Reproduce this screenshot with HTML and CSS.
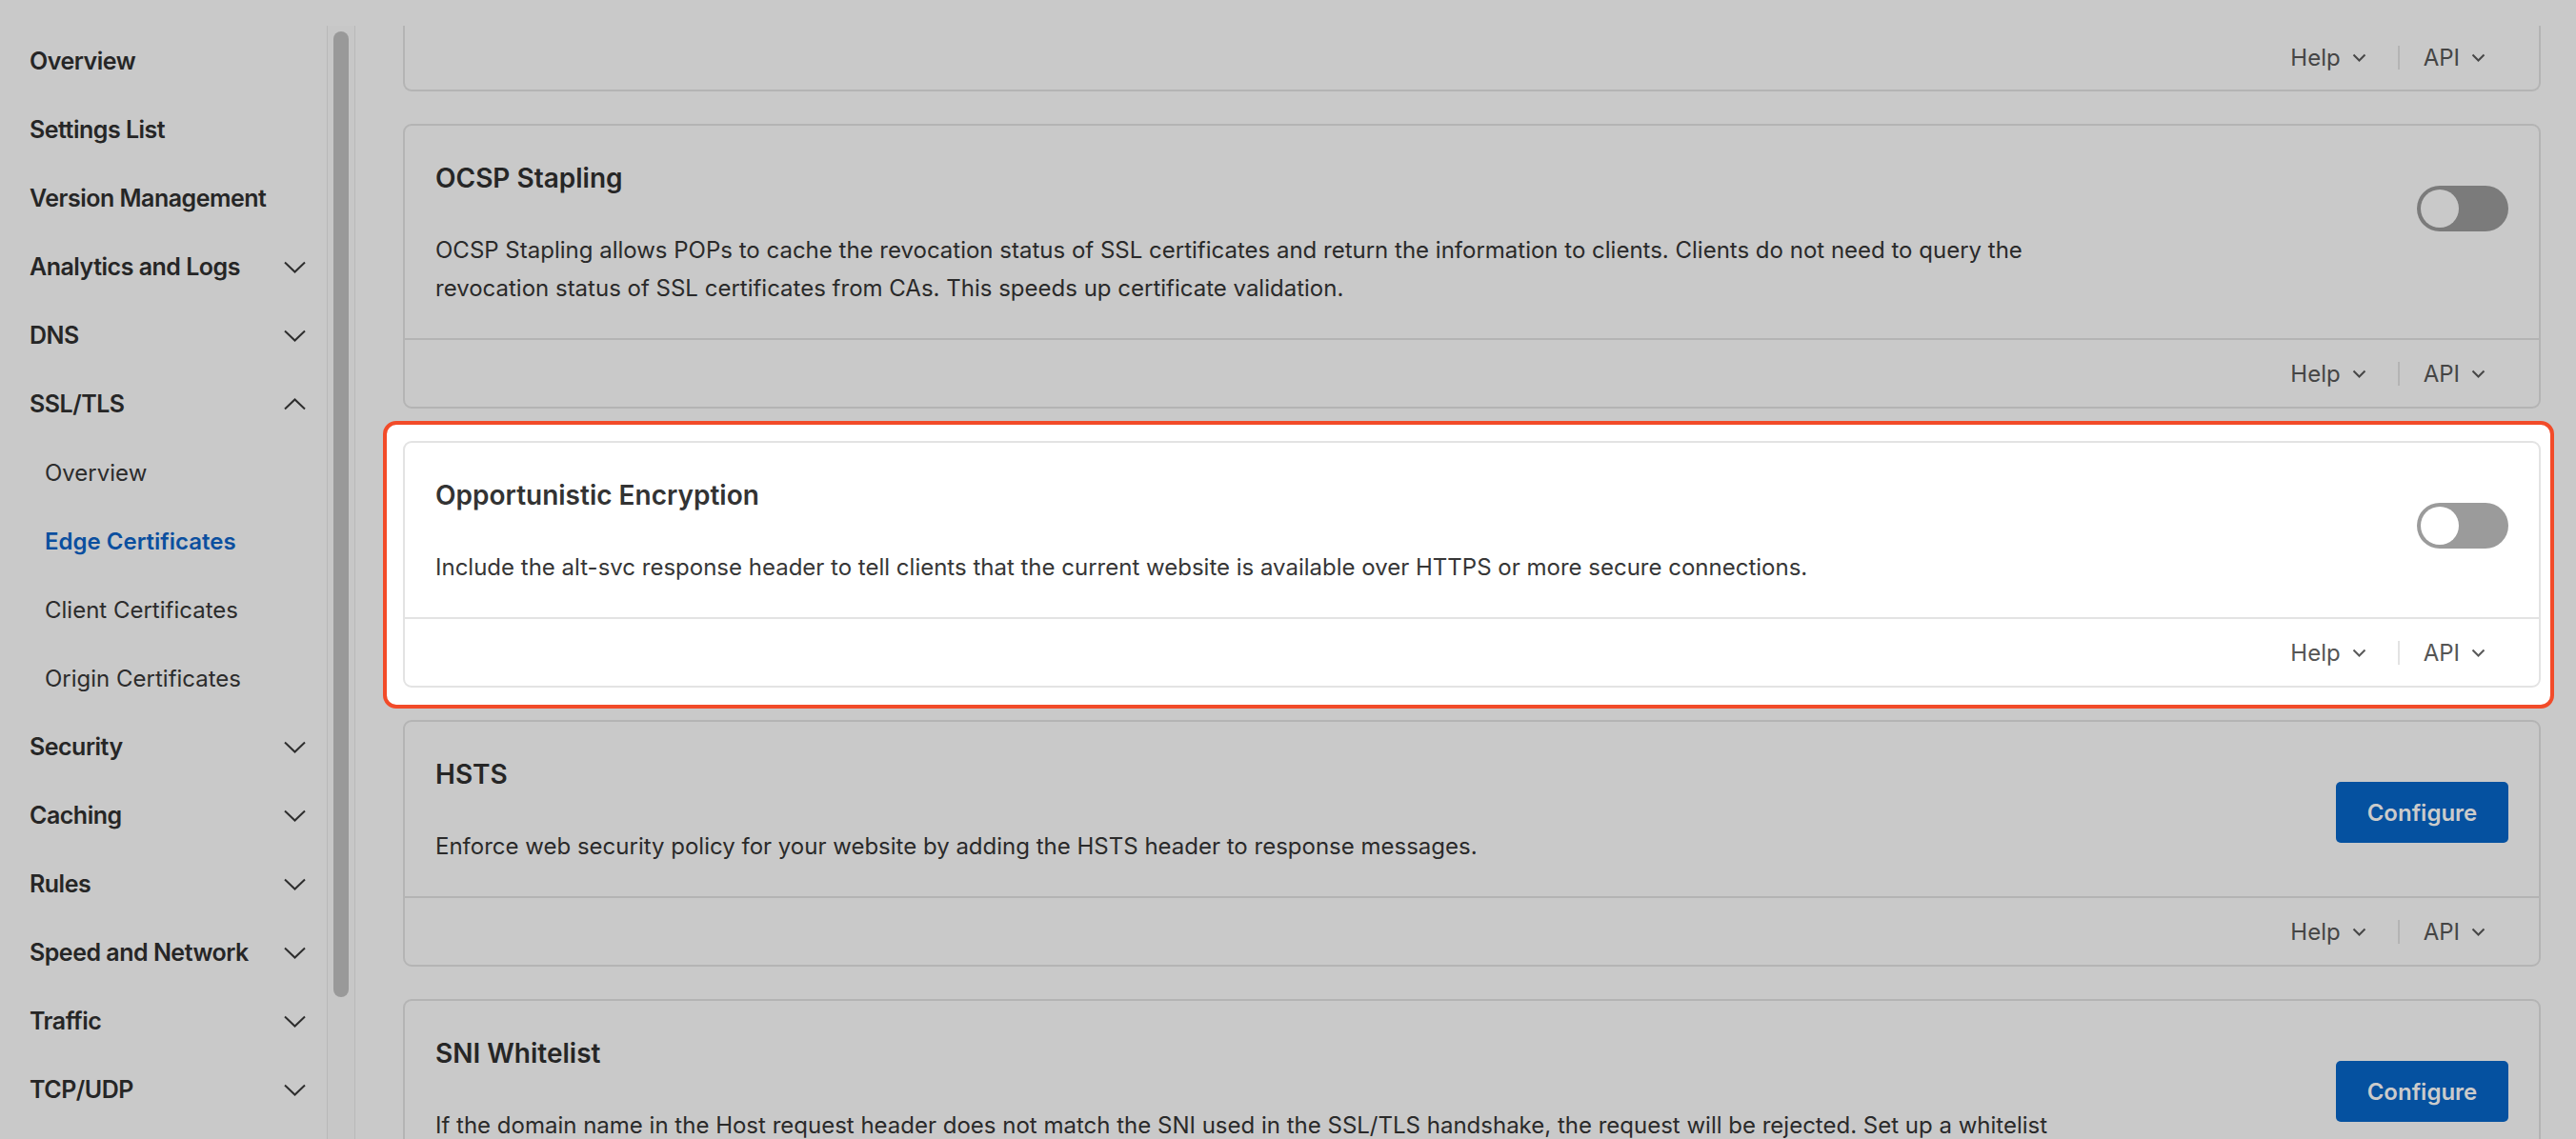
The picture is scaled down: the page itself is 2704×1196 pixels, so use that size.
FILE: index.html
```html
<!DOCTYPE html>
<html lang="en">
<head>
<meta charset="utf-8">
<title>Edge Certificates</title>
<link rel="stylesheet" href="styles.css">
</head>
<body>
<div class="app">
  <aside class="sidebar">
    <nav class="nav">
      <div class="nav-item">Overview</div>
      <div class="nav-item">Settings List</div>
      <div class="nav-item">Version Management</div>
      <div class="nav-item">Analytics and Logs<svg class="chev" viewBox="0 0 23 13"><path d="M1 1.5 L11.5 11.5 L22 1.5"/></svg></div>
      <div class="nav-item">DNS<svg class="chev" viewBox="0 0 23 13"><path d="M1 1.5 L11.5 11.5 L22 1.5"/></svg></div>
      <div class="nav-item">SSL/TLS<svg class="chev" viewBox="0 0 23 13"><path d="M1 11.5 L11.5 1.5 L22 11.5"/></svg></div>
      <div class="nav-sub">Overview</div>
      <div class="nav-sub active">Edge Certificates</div>
      <div class="nav-sub">Client Certificates</div>
      <div class="nav-sub">Origin Certificates</div>
      <div class="nav-item">Security<svg class="chev" viewBox="0 0 23 13"><path d="M1 1.5 L11.5 11.5 L22 1.5"/></svg></div>
      <div class="nav-item">Caching<svg class="chev" viewBox="0 0 23 13"><path d="M1 1.5 L11.5 11.5 L22 1.5"/></svg></div>
      <div class="nav-item">Rules<svg class="chev" viewBox="0 0 23 13"><path d="M1 1.5 L11.5 11.5 L22 1.5"/></svg></div>
      <div class="nav-item">Speed and Network<svg class="chev" viewBox="0 0 23 13"><path d="M1 1.5 L11.5 11.5 L22 1.5"/></svg></div>
      <div class="nav-item">Traffic<svg class="chev" viewBox="0 0 23 13"><path d="M1 1.5 L11.5 11.5 L22 1.5"/></svg></div>
      <div class="nav-item">TCP/UDP<svg class="chev" viewBox="0 0 23 13"><path d="M1 1.5 L11.5 11.5 L22 1.5"/></svg></div>
    </nav>
    <div class="scrolltrack"><div class="thumb"></div></div>
  </aside>

  <main class="main">
    <section class="card card-clipped">
      <div class="card-foot">
        <span class="link">Help<svg class="mini" viewBox="0 0 15 9"><path d="M1.5 1.5 L7.5 7.5 L13.5 1.5"/></svg></span>
        <span class="sep"></span>
        <span class="link">API<svg class="mini" viewBox="0 0 15 9"><path d="M1.5 1.5 L7.5 7.5 L13.5 1.5"/></svg></span>
      </div>
    </section>

    <section class="card">
      <div class="card-head">
        <div class="card-text">
          <h3 class="card-title">OCSP Stapling</h3>
          <p class="card-desc">OCSP Stapling allows POPs to cache the revocation status of SSL certificates and return the information to clients. Clients do not need to query the revocation status of SSL certificates from CAs. This speeds up certificate validation.</p>
        </div>
        <span class="toggle"><span class="knob"></span></span>
      </div>
      <div class="card-foot">
        <span class="link">Help<svg class="mini" viewBox="0 0 15 9"><path d="M1.5 1.5 L7.5 7.5 L13.5 1.5"/></svg></span>
        <span class="sep"></span>
        <span class="link">API<svg class="mini" viewBox="0 0 15 9"><path d="M1.5 1.5 L7.5 7.5 L13.5 1.5"/></svg></span>
      </div>
    </section>

    <div class="spotlight">
      <section class="card card-lit">
        <div class="card-head">
          <div class="card-text">
            <h3 class="card-title">Opportunistic Encryption</h3>
            <p class="card-desc">Include the alt-svc response header to tell clients that the current website is available over HTTPS or more secure connections.</p>
          </div>
          <span class="toggle"><span class="knob"></span></span>
        </div>
        <div class="card-foot">
          <span class="link">Help<svg class="mini" viewBox="0 0 15 9"><path d="M1.5 1.5 L7.5 7.5 L13.5 1.5"/></svg></span>
          <span class="sep"></span>
          <span class="link">API<svg class="mini" viewBox="0 0 15 9"><path d="M1.5 1.5 L7.5 7.5 L13.5 1.5"/></svg></span>
        </div>
      </section>
    </div>

    <section class="card">
      <div class="card-head">
        <div class="card-text">
          <h3 class="card-title">HSTS</h3>
          <p class="card-desc">Enforce web security policy for your website by adding the HSTS header to response messages.</p>
        </div>
        <button class="btn">Configure</button>
      </div>
      <div class="card-foot">
        <span class="link">Help<svg class="mini" viewBox="0 0 15 9"><path d="M1.5 1.5 L7.5 7.5 L13.5 1.5"/></svg></span>
        <span class="sep"></span>
        <span class="link">API<svg class="mini" viewBox="0 0 15 9"><path d="M1.5 1.5 L7.5 7.5 L13.5 1.5"/></svg></span>
      </div>
    </section>

    <section class="card">
      <div class="card-head">
        <div class="card-text">
          <h3 class="card-title">SNI Whitelist</h3>
          <p class="card-desc">If the domain name in the Host request header does not match the SNI used in the SSL/TLS handshake, the request will be rejected. Set up a whitelist to allow the requests.</p>
        </div>
        <button class="btn">Configure</button>
      </div>
    </section>
  </main>
</div>
</body>
</html>
```

FILE: styles.css
```css
* { box-sizing: border-box; }

html, body {
  margin: 0;
  padding: 0;
  height: 100%;
}

body {
  background: #c9c9c9;
  font-family: Inter, "Noto Sans", "Liberation Sans", sans-serif;
  color: #282828;
  overflow: hidden;
}

.app {
  display: flex;
  height: 1196px;
  padding-top: 27px;
}

/* ---------- sidebar ---------- */
.sidebar {
  display: flex;
  flex: none;
  width: 373px;
  height: 100%;
}

.nav {
  width: 343px;
  flex: none;
  padding: 1px 22px 0 31px;
  overflow: hidden;
}

.nav-item,
.nav-sub {
  height: 72px;
  display: flex;
  align-items: center;
  justify-content: space-between;
  white-space: nowrap;
}

.nav-item {
  font-size: 25px;
  font-weight: 600;
  letter-spacing: -0.5px;
  color: #262626;
}

.nav-sub {
  padding-left: 16px;
  font-size: 24px;
  font-weight: 400;
  color: #2c2c2c;
}

.nav-sub.active {
  font-weight: 600;
  color: #0b4f9f;
}

.chev {
  width: 23px;
  height: 13px;
  fill: none;
  stroke: #2e2e2e;
  stroke-width: 2;
  flex: none;
}

.scrolltrack {
  width: 30px;
  flex: none;
  border-left: 1px solid #b9b9b9;
  border-right: 1px solid #b9b9b9;
  background: #c7c7c7;
  padding: 6px 6px 0;
}

.thumb {
  width: 16px;
  height: 1014px;
  border-radius: 8px;
  background: #999999;
}

/* ---------- main ---------- */
.main {
  flex: 1;
  min-width: 0;
  height: 100%;
  overflow: hidden;
  padding: 0 37px 0 50px;
  display: flex;
  flex-direction: column;
  gap: 34px;
}

.card {
  flex: none;
  border: 2px solid #b4b4b4;
  border-radius: 9px;
  position: relative;
  z-index: 1;
}

.card-clipped {
  border-top: none;
  border-top-left-radius: 0;
  border-top-right-radius: 0;
}

.card-clipped .card-foot {
  height: 67px;
  border-top: none;
}

.card-head {
  display: flex;
  justify-content: space-between;
  align-items: flex-start;
  padding: 35px 32px 32px;
}

.card-text {
  min-width: 0;
}

.card-title {
  margin: 0 0 36px;
  font-size: 28px;
  line-height: 40px;
  font-weight: 600;
  color: #262626;
}

.card-desc {
  margin: 0;
  max-width: 1700px;
  font-size: 24px;
  line-height: 40px;
  color: #2a2a2a;
}

.toggle {
  flex: none;
  margin-top: 28px;
  width: 96px;
  height: 48px;
  border-radius: 24px;
  background: #7b7b7b;
  padding: 4px;
  display: flex;
}

.knob {
  width: 40px;
  height: 40px;
  border-radius: 50%;
  background: #c9c9c9;
}

.btn {
  flex: none;
  margin-top: 28px;
  width: 181px;
  height: 64px;
  border: none;
  border-radius: 5px;
  background: #0551a0;
  color: #cbcbcb;
  font-family: inherit;
  font-size: 24px;
  font-weight: 600;
  padding: 0;
}

.card-foot {
  height: 72px;
  border-top: 2px solid #b4b4b4;
  display: flex;
  justify-content: flex-end;
  align-items: center;
  padding-right: 56px;
  font-size: 24px;
  color: #454545;
}

.link {
  display: flex;
  align-items: center;
  gap: 12px;
}

.mini {
  width: 15px;
  height: 9px;
  fill: none;
  stroke: #474747;
  stroke-width: 2;
}

.sep {
  width: 2px;
  height: 25px;
  background: #b4b4b4;
  margin: 0 25px 0 33px;
}

/* ---------- spotlight (highlight overlay) ---------- */
.spotlight {
  flex: none;
  position: relative;
}

.spotlight::before {
  content: "";
  position: absolute;
  top: -21px;
  bottom: -22px;
  left: -21px;
  right: -14px;
  border: 4px solid #f24b29;
  border-radius: 14px;
  background: #ffffff;
  z-index: 0;
}

.card-lit {
  background: #ffffff;
  border-color: #e3e3e3;
}

.card-lit .card-title { color: #333333; }
.card-lit .card-desc { color: #363636; }
.card-lit .card-foot {
  border-top-color: #e3e3e3;
  color: #555555;
}
.card-lit .mini { stroke: #5a5a5a; }
.card-lit .sep { background: #e3e3e3; }
.card-lit .toggle { background: #9b9b9b; }
.card-lit .knob { background: #ffffff; }
```
